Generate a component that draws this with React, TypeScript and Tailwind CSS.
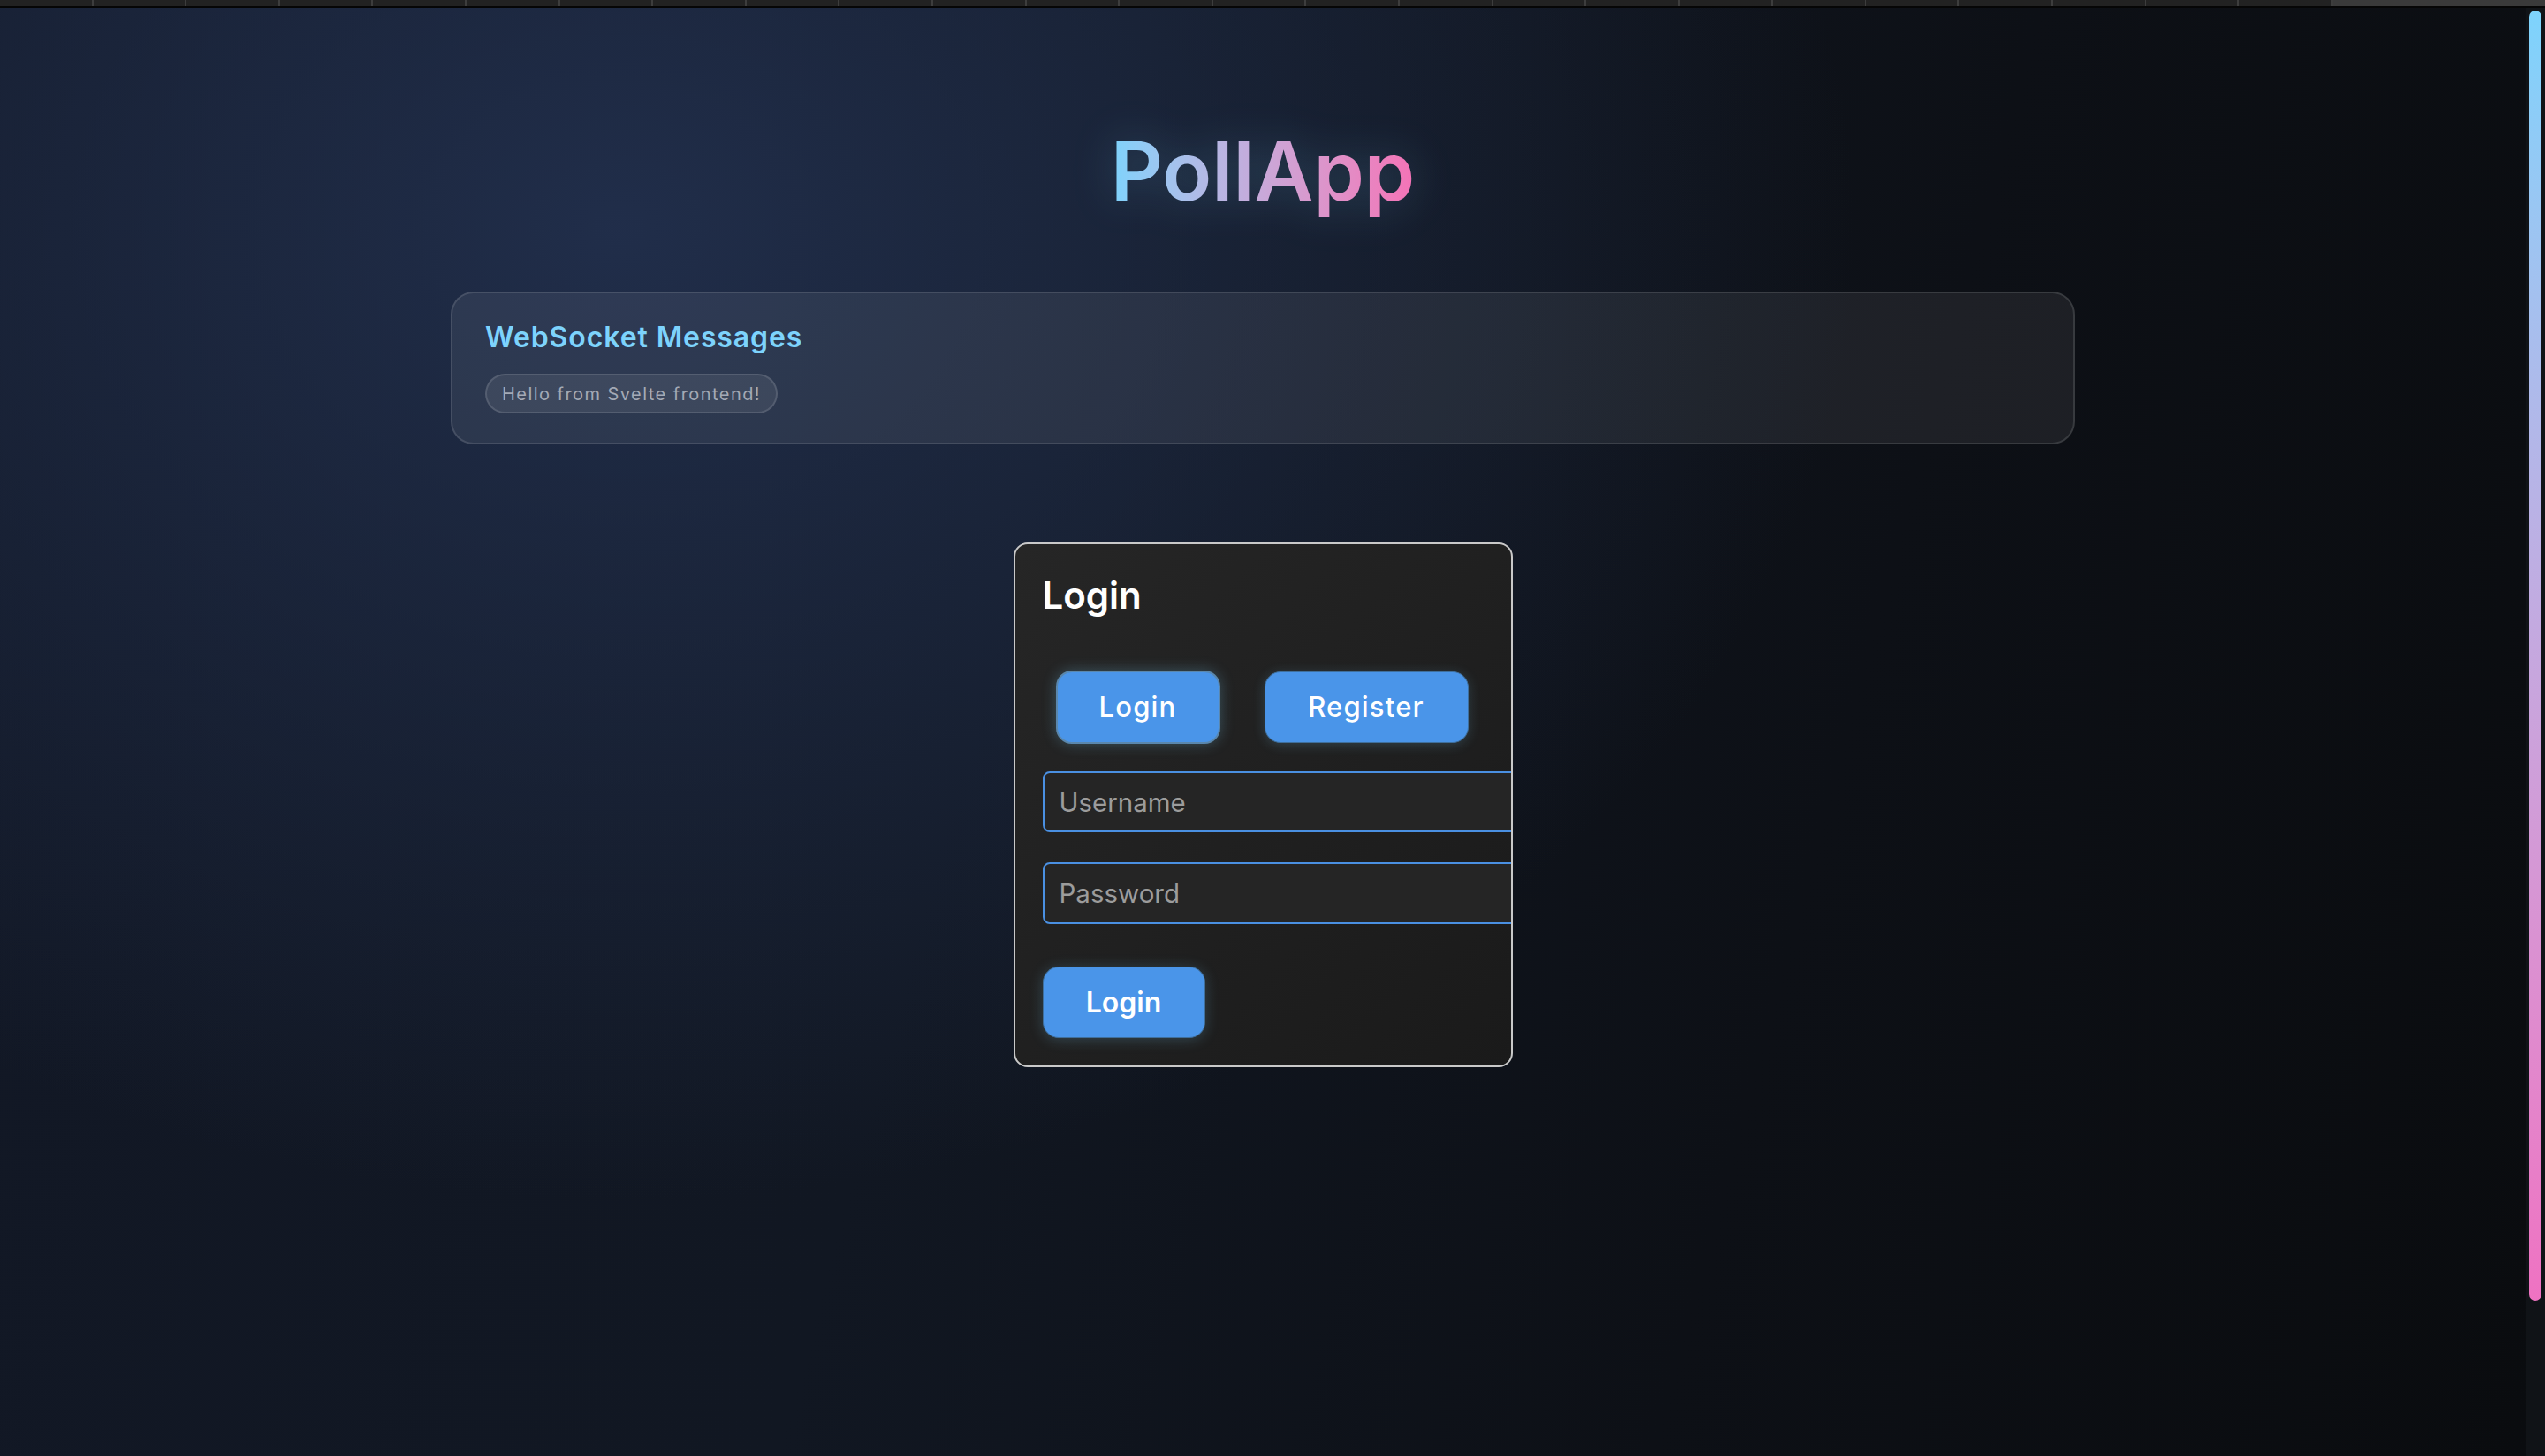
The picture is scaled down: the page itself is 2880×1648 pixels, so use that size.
import React from "react";

export default function App() {
  const segs = Array.from({ length: 25 });
  return (
    <div className="w-[2880px] h-[1648px] flex flex-col overflow-hidden bg-[#0a0c0f] font-[Inter,'Noto_Sans',sans-serif]">
      {/* top strip */}
      <div className="h-[7px] flex bg-[#222222] shrink-0">
        {segs.map((_, i) => (
          <div key={i} className="w-[105.6px] h-full shrink-0 border-r-2 border-[#3d3d3d]" />
        ))}
        <div className="flex-1 bg-[#3a3a3a]" />
      </div>
      <div className="h-[2px] bg-[#060606] shrink-0" />

      <div className="flex-1 flex min-h-0">
        <main className="flex-1 flex flex-col items-center bg-[radial-gradient(ellipse_1400px_1100px_at_700px_250px,rgba(34,48,78,0.9)_0%,rgba(34,48,78,0)_100%),linear-gradient(105deg,#121826_0%,#111722_40%,#0d1016_70%,#0a0c0f_100%)]">
          <h1 className="mt-[129px] text-[92px] leading-[112px] font-semibold bg-linear-to-r from-[#7dd3fc] to-[#f472b6] bg-clip-text text-transparent drop-shadow-[0_0_24px_rgba(125,211,252,0.22)]">
            PollApp
          </h1>

          <section className="mt-[80px] w-[1838px] h-[173px] rounded-[26px] border-2 border-white/[0.12] bg-white/[0.07] px-[37px] pt-[30px]">
            <h2 className="text-[32px] leading-[39px] font-semibold text-[#7dd3fc] tracking-[0.9px]">
              WebSocket Messages
            </h2>
            <div className="mt-[22px] inline-flex h-[45px] items-center px-[17px] rounded-full border-2 border-white/[0.12] bg-white/[0.08] text-[20px] text-[#a4aab6] tracking-[1.45px]">
              Hello from Svelte frontend!
            </div>
          </section>

          <div className="mt-[111px] w-[565px] rounded-[16px] border-2 border-[#c9c9c9] bg-linear-to-br from-[#262626] to-[#1a1a1a] pt-[32px] pb-[31px] pl-[31px] overflow-hidden">
            <h2 className="text-[42px] leading-[51px] font-semibold text-white">Login</h2>

            <div className="mt-[60px] flex items-center pl-[15px] gap-[50px]">
              <button className="w-[186px] h-[83px] rounded-[18px] bg-[#4a95e9] border-2 border-[#5a87ad] text-[31px] tracking-[1.2px] font-medium text-white shadow-[0_0_16px_rgba(125,211,252,0.28)]">
                Login
              </button>
              <button className="w-[231px] h-[81px] rounded-[18px] bg-[#4a95e9] border border-[#3f6f9c] text-[31px] tracking-[1.2px] font-medium text-white shadow-[0_2px_14px_rgba(125,211,252,0.2)]">
                Register
              </button>
            </div>

            <input
              placeholder="Username"
              className="mt-[31px] block w-[545px] h-[69px] rounded-[8px] border-2 border-[#4a90e2] bg-[#252525] px-[17px] text-[29.5px] text-white placeholder:text-[#9c9c9c] outline-none"
            />
            <input
              type="password"
              placeholder="Password"
              className="mt-[34px] block w-[545px] h-[70px] rounded-[8px] border-2 border-[#4a90e2] bg-[#252525] px-[17px] text-[29.5px] text-white placeholder:text-[#9c9c9c] outline-none"
            />

            <button className="mt-[48px] w-[184px] h-[81px] rounded-[18px] bg-[#4a95e9] border border-[#3f6f9c] text-[32px] font-semibold text-white shadow-[0_2px_16px_rgba(125,211,252,0.22)]">
              Login
            </button>
          </div>
        </main>

        {/* scrollbar */}
        <div className="w-[22px] shrink-0 bg-[#101317] pt-[3px] flex justify-center">
          <div className="w-[14px] h-[1460px] rounded-full bg-linear-to-b from-[#7dd3fc] to-[#ef72c2]" />
        </div>
      </div>
    </div>
  );
}
